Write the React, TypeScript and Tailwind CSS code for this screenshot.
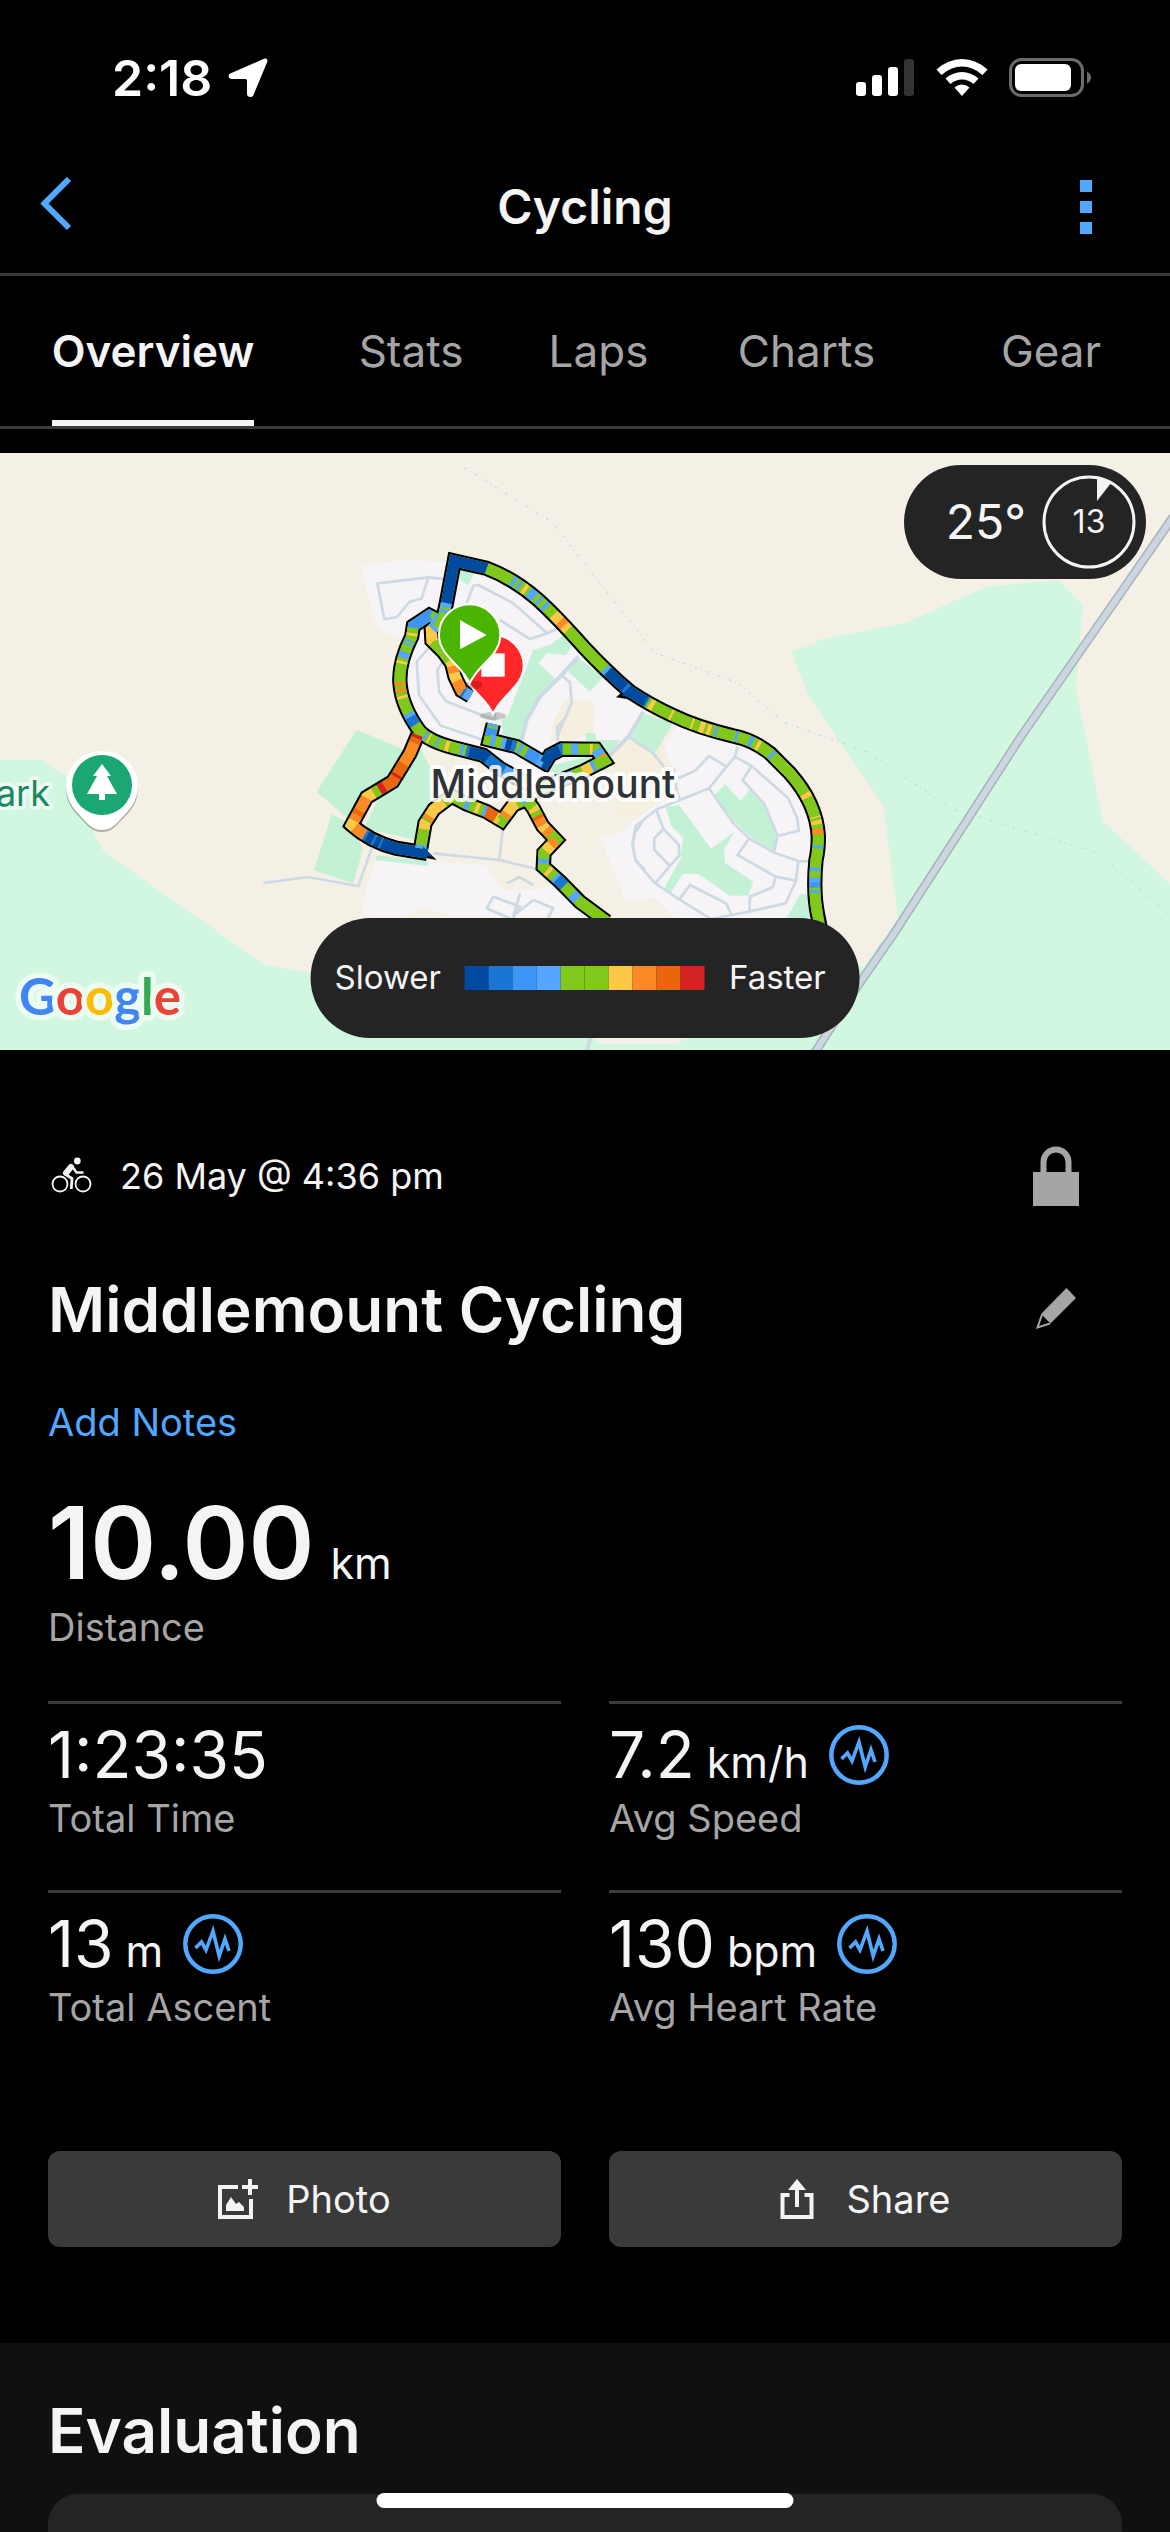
import React from "react";

const C = {
  b0: "#004a9f",
  b1: "#1976d2",
  b2: "#3d96f5",
  b3: "#54a6ff",
  g: "#80c91c",
  y: "#fbc947",
  o: "#fa8926",
  d: "#ea660d",
  r: "#d32222",
} as const;
type Shade = keyof typeof C;

/* Each track is a line with its speed bands, listed as [shade, length along the line]. */
const tracks: { d: string; bands: [Shade, number][] }[] = [
  {
    d: "M368 300L378 255L403 123L500 145Q580 175 655 240Q710 290 790 380Q860 455 930 515Q990 555 1055 585Q1130 622 1240 648Q1300 660 1350 700L1410 760Q1490 850 1495 950Q1495 990 1488 1020Q1478 1120 1495 1195L1505 1250",
    bands: [
      ["g", 22], ["b3", 10], ["g", 6], ["b3", 14], ["b0", 228], ["g", 84], ["b3", 12], ["g", 10], ["b3", 9], ["g", 10], ["y", 12],
      ["g", 8], ["b3", 24], ["g", 12], ["b3", 10], ["g", 14], ["b3", 12], ["g", 30], ["y", 26], ["o", 20], ["y", 16], ["g", 160],
      ["b3", 12], ["b0", 70], ["b1", 10], ["b0", 66], ["b1", 6], ["g", 8], ["y", 14], ["g", 56], ["y", 7], ["g", 62], ["y", 6],
      ["g", 20], ["y", 16], ["g", 8], ["y", 12], ["g", 10], ["b3", 8], ["g", 56], ["b3", 8], ["g", 36], ["b3", 12], ["g", 14],
      ["y", 10], ["g", 40], ["b3", 10], ["g", 148], ["y", 14], ["g", 62], ["y", 4], ["g", 8], ["y", 12], ["g", 12], ["o", 18],
      ["g", 32], ["b3", 10], ["g", 58], ["b3", 10], ["g", 20], ["b3", 14], ["b2", 16], ["g", 8], ["b3", 8], ["g", 60],
    ],
  },
  {
    d: "M452 528L425 512L405 470L395 430L372 398L336 362L334 330L358 306",
    bands: [["b3", 20], ["b1", 8], ["o", 36], ["y", 26], ["o", 20], ["y", 20], ["g", 75], ["y", 40], ["b3", 12], ["g", 20]],
  },
  {
    d: "M362 304L328 286L280 318L275 350Q235 430 240 490Q245 560 300 635Q330 665 400 683L490 706L540 745L620 790",
    bands: [
      ["g", 14], ["b3", 10], ["g", 12], ["b2", 66], ["g", 16], ["y", 8], ["g", 14], ["b3", 6], ["g", 5], ["b3", 6], ["g", 22],
      ["b3", 18], ["g", 10], ["y", 8], ["g", 56], ["o", 10], ["g", 10], ["o", 10], ["g", 12], ["y", 8], ["g", 48], ["b3", 12],
      ["b1", 28], ["g", 42], ["b3", 8], ["g", 6], ["y", 6], ["g", 22], ["b3", 6], ["g", 22], ["y", 12], ["g", 34], ["b3", 10],
      ["g", 8], ["b1", 10], ["b0", 60], ["b1", 60], ["b3", 40],
    ],
  },
  {
    d: "M293 645L270 700L218 785L140 832L95 915Q150 965 230 985L322 1000",
    bands: [
      ["r", 10], ["d", 16], ["o", 70], ["d", 38], ["r", 8], ["d", 46], ["r", 18], ["g", 20], ["y", 26], ["o", 44], ["d", 14],
      ["o", 20], ["y", 26], ["o", 38], ["b1", 8], ["b0", 20], ["b1", 8], ["b0", 16], ["b1", 6], ["b0", 200],
    ],
  },
  {
    d: "M302 985L315 910L342 868L395 828L440 852L500 875L545 902L580 855L620 838",
    bands: [
      ["b3", 10], ["g", 48], ["y", 26], ["g", 6], ["o", 12], ["y", 60], ["g", 12], ["y", 20], ["g", 44], ["b3", 14], ["g", 20],
      ["y", 12], ["g", 12], ["b3", 10], ["d", 34], ["y", 14], ["g", 20], ["o", 14], ["y", 40],
    ],
  },
  {
    d: "M612 828L640 865L668 918L708 960L672 998L670 1040L720 1085L780 1146L860 1205",
    bands: [
      ["b3", 20], ["g", 24], ["y", 14], ["g", 14], ["d", 10], ["o", 22], ["y", 16], ["o", 20], ["g", 26], ["o", 20], ["y", 24],
      ["g", 26], ["b3", 14], ["g", 24], ["y", 12], ["g", 18], ["b3", 10], ["b1", 30], ["g", 34], ["b3", 22], ["g", 120],
    ],
  },
  {
    d: "M520 612L508 660L590 680L675 730L690 705L725 687L828 688L852 722L790 754L700 790L620 828",
    bands: [
      ["b3", 8], ["g", 6], ["b2", 26], ["g", 14], ["b3", 14], ["g", 20], ["b3", 12], ["b0", 18], ["b1", 14], ["g", 10], ["b3", 10],
      ["g", 16], ["b2", 40], ["b3", 20], ["b0", 66], ["b1", 10], ["g", 26], ["b3", 20], ["g", 36], ["y", 8], ["g", 12], ["b3", 20],
      ["o", 10], ["g", 40], ["b3", 12], ["y", 30], ["g", 30], ["b3", 60],
    ],
  },
];

const Track = ({ d, bands }: { d: string; bands: [Shade, number][] }) => {
  let at = 0;
  return (
    <g>
      <path d={d} stroke={C.g} strokeWidth="33" />
      {bands.map(([shade, len], i) => {
        const from = at;
        at += len;
        return <path key={i} d={d} stroke={C[shade]} strokeWidth="33" strokeDasharray={`0 ${from} ${len + 1} 9999`} />;
      })}
    </g>
  );
};

const RouteMap = () => (
  <svg viewBox="0 0 1170 597" preserveAspectRatio="xMidYMid slice" className="block h-auto w-full" role="img" aria-label="Route map of Middlemount">
    <rect width="1170" height="597" fill="#f4f0e5" />
    <path d="M0 307H42L65 323L94 380L103 398L265 512L311 520L600 560L863 514L898 466L883 352L809 244L791 198L817 190V187L905 170L986 134L1059 127L1083 152L1076 235L1103 368L1170 431V597H0Z" fill="#d2f7e0" />
    <path d="M590 584L602 591H676L690 584Z" fill="#f4f0e5" />
    <path d="M591 584L587 597" stroke="#cdd9e3" strokeWidth="4" />
    <path d="M460 12L552 69L613 147L655 200L738 230L783 269L867 299L952 356L1098 400L1168 460" fill="none" stroke="#a4e0ec" strokeWidth="1" strokeDasharray="1 4 3 4" />
    <path d="M874 502L880 491L890 486L884 500Z" fill="#cdd9e3" />
    <path d="M1180 54L1120 141L1020 285L895 479L857 534L812 604" fill="none" stroke="#a7b2bc" strokeWidth="9" />
    <path d="M1180 54L1120 141L1020 285L895 479L857 534L812 604" fill="none" stroke="#ccd6df" strokeWidth="6" />

    <g transform="translate(320 67) scale(0.33333)" fill="none">
      <g fill="#f6f4f6">
        <path d="M122 142L250 118L385 128L500 150L620 220L740 330L840 430L960 520L1060 560L1070 620L1000 560L960 600L930 650L850 700L700 760L620 780L500 705L300 640L245 480L262 365L172 325Z" />
        <path d="M960 520L1070 585L1240 650L1400 720L1490 840L1505 970L1470 1030L1475 1205H1075L1005 1135L918 1140L840 950L890 945L1005 855L1075 820V775L1040 750L1020 695L1070 620Z" />
        <path d="M168 1018L500 1035L545 1110H640L700 1090L800 1190H130L127 1145Z" />
      </g>
      <path d="M740 535L822 545L820 640L740 665L690 665L700 600ZM925 655L1000 600L1040 700L1075 780L1000 850L900 900L860 760L870 705Z" fill="#f5efe0" />
      <path d="M230 1195L310 1165L430 1195Z" fill="#f4f0e5" />
      <g fill="#c3f1d6">
        <path d="M420 150L462 160L445 195L420 180ZM545 600L562 590L620 440L640 390L690 375L730 345L755 380L738 405L680 400L655 430L705 475L640 560L600 660L548 650ZM775 415L850 470L810 515L745 455Z" />
        <path d="M110 629L255 690L285 700L170 820L80 892L-10 815ZM35 883L80 905L130 984L100 1090L-18 1050ZM300 680L330 740L345 845L310 965L130 925L190 810ZM170 1005L325 1025L322 1038L165 1020Z" />
        <path d="M700 735L840 700L850 720L740 765L690 755ZM795 640H828V660H900L860 715L800 680Z" />
        <path d="M970 580L1058 610L1005 700L932 655ZM1215 792L1262 842L1290 810L1335 860L1370 945L1362 995L1290 950L1230 890L1185 825ZM1037 862L1078 855L1173 986L1243 935L1212 990L1215 1028L1300 1085L1285 1127H1230L1135 1062H1088L1052 1120L1033 1105L1085 1010L1102 1010L1080 1010L1090 955L1055 920ZM1440 1123H1465L1475 1195H1400Z" />
      </g>
      <g stroke="#cdd9e3" strokeWidth="8">
        <path d="M385 178L325 172L172 190L193 297L230 292L268 246L305 235L325 172M440 250L460 197L475 195L580 250L682 340L715 325M540 300L630 357L682 340M360 345L290 425L297 525L362 617L490 660M375 415L352 450L357 515L380 545L525 600V580" />
        <path d="M725 465L750 488L755 550L715 640L712 665M735 595L712 620V650M925 650L960 675L1000 700L1035 745M550 915L538 1020M340 1000L538 1020L650 1047M560 1090L598 1072L640 1095M155 985L115 1098L-38 1071L-170 1089M967 905L945 940L938 975L947 1020L975 1050" />
        <path d="M1075 775L1125 753L1167 708L1220 740M1253 680L1245 710L1220 740L1167 805L1080 840L1010 868L947 918L937 975L947 1022L1005 1090L1078 1138L1170 1195M1245 710L1295 738L1405 835L1432 895L1436 932L1373 948L1362 995M1295 738L1268 780L1333 852L1373 948M1167 805L1238 907L1287 955L1362 998L1435 1023L1470 1025M1287 955L1253 1005L1367 1070L1428 1082L1435 1023M1428 1082L1397 1150L1287 1175L1235 1185L1170 1197M1367 1070L1358 1102L1290 1130L1288 1175M1235 1185L1218 1150L1110 1095L1078 1138M1010 872L1030 927L1077 975V1007L1050 1038L1005 1090M1030 927L1003 955V990L1050 1038M1062 745L1070 810L1080 840" />
        <path d="M520 1130L500 1165L580 1200M520 1130L600 1160L570 1210M640 1140L700 1165L680 1200M640 1140L590 1180M600 1120L580 1190" />
        <path d="M775 410L725 465L660 530L620 600L605 660M970 575L925 650L870 705" strokeWidth="12" />
      </g>

      <g stroke="#000" strokeWidth="46">
        {tracks.map((t) => (
          <path key={t.d} d={t.d} />
        ))}
        <path d="M300 972L350 1020L300 1010ZM888 532L925 500L940 540ZM836 672L878 730L850 750Z" fill="#000" stroke="none" />
      </g>
      {tracks.map((t) => (
        <Track key={t.d} {...t} />
      ))}
      <path d="M310 980L338 1010L300 1005ZM905 526L925 508L935 535Z" fill={C.b0} />

      <ellipse cx="519" cy="588" rx="40" ry="12" fill="#000" opacity=".18" />
      <path d="M519 582C495 525 427 500 427 437A92 92 0 0 1 611 437C611 500 543 525 519 582Z" fill="#ff272a" stroke="#fff" strokeWidth="6" />
      <path d="M484 400H554V470H484Z" fill="#fff" />
      <ellipse cx="462" cy="494" rx="26" ry="12" fill="#8c0a0a" opacity=".35" />
      <path d="M449 490C425 433 357 408 357 345A92 92 0 0 1 541 345C541 408 473 433 449 490Z" fill="#4bb400" stroke="#fff" strokeWidth="6" />
      <path d="M420 300V388L500 345Z" fill="#fff" />
    </g>

    <text x="553" y="345" textAnchor="middle" fill="#2f3338" stroke="#fff" strokeOpacity=".85" strokeWidth="8" strokeLinejoin="round" paintOrder="stroke" className="font-['Inter',sans-serif] text-[39px] font-medium">
      Middlemount
    </text>
    <text x="50" y="353" textAnchor="end" fill="#1c8763" stroke="#ecfcf3" strokeWidth="7" strokeLinejoin="round" paintOrder="stroke" className="font-['Inter',sans-serif] text-[36px]">
      ark
    </text>

    <path d="M102 379C94 379 90 375 86 371C76 360 66 353 66 335A36 36 0 0 1 138 335C138 353 128 360 118 371C114 375 110 379 102 379Z" fill="#000" opacity=".28" />
    <path d="M102 377C94 377 90 373 86 369C76 358 66 350 66 332A36 34 0 0 1 138 332C138 350 128 358 118 369C114 373 110 377 102 377Z" fill="#fff" />
    <circle cx="102" cy="332" r="30" fill="#1aa774" />
    <path d="M102 311L111 323H107L117 341H105V347H99V341H87L97 323H93Z" fill="#fff" />

    <text x="19" y="562" stroke="#ecfcf3" strokeWidth="11" strokeLinejoin="round" paintOrder="stroke" className="font-['Lato',sans-serif] text-[51px] font-bold">
      <tspan fill="#4285f4">G</tspan>
      <tspan fill="#ea4335">o</tspan>
      <tspan fill="#fbbc05">o</tspan>
      <tspan fill="#4285f4">g</tspan>
      <tspan fill="#34a853">l</tspan>
      <tspan fill="#ea4335">e</tspan>
    </text>
  </svg>
);

const PulseIcon = () => (
  <svg viewBox="0 0 60 60" className="size-[60px]" fill="none" stroke="#52a7ff" aria-hidden="true">
    <circle cx="30" cy="30" r="27.7" strokeWidth="4.5" />
    <path d="M12.5 34L18.5 28L23 36L30 17L36.2 42L42 25L46 37" strokeWidth="3.6" strokeMiterlimit="10" />
  </svg>
);

const BikeIcon = () => (
  <svg viewBox="-2 0 44 40" className="h-10 w-11" fill="none" stroke="#f4f4f4" aria-hidden="true">
    <circle cx="10" cy="28" r="7.5" strokeWidth="1.8" />
    <circle cx="33" cy="28" r="7.5" strokeWidth="1.8" />
    <circle cx="27.3" cy="5" r="3.4" fill="#f4f4f4" stroke="none" />
    <path d="M21 11L16 17" strokeWidth="6" strokeLinecap="round" />
    <path d="M15 18L22 22.5L21.3 33" strokeWidth="2.8" />
    <path d="M22 10L26.5 16.5H33.5" strokeWidth="2.4" />
  </svg>
);

const stats = [
  { label: "Total Time", value: "1:23:35" },
  { label: "Avg Speed", value: "7.2", unit: "km/h", chart: true },
  { label: "Total Ascent", value: "13", unit: "m", chart: true },
  { label: "Avg Heart Rate", value: "130", unit: "bpm", chart: true },
];

const tabs = ["Overview", "Stats", "Laps", "Charts", "Gear"];

const legend = [
  "bg-[#004a9f]",
  "bg-[#1976d2]",
  "bg-[#3d96f5]",
  "bg-[#54a6ff]",
  "bg-[#80c91c]",
  "bg-[#80c91c]",
  "bg-[#fbc947]",
  "bg-[#fa8926]",
  "bg-[#ea660d]",
  "bg-[#d32222]",
];

export default function App() {
  return (
    <div className="flex min-h-screen flex-col bg-black font-['Inter',sans-serif] text-[#f4f4f4]">
      <div className="flex h-[156px] items-center justify-between pr-[78px] pl-[112px] text-white">
        <div className="flex items-center gap-4">
          <span className="text-[50px] leading-none font-semibold">2:18</span>
          <svg viewBox="0 0 40 40" className="size-10" fill="#fff" aria-hidden="true">
            <path d="M36 .8C38.600 -.2 40 1.400 39.200 4L25.500 37C24.300 40 19 39.600 19 36V22.500Q19 21 17.500 21H4C.2 21 -.6 16.800 2.800 15.300Z" />
          </svg>
        </div>
        <svg viewBox="0 0 236 40" className="h-10 w-[236px]" fill="#fff" aria-hidden="true">
          <rect x="0" y="24" width="10" height="14" rx="3" />
          <rect x="16" y="17" width="10" height="21" rx="3" />
          <rect x="32" y="9" width="10" height="29" rx="3" />
          <rect x="48" y="1" width="10" height="37" rx="3" fill="#333" />
          <path d="M80.500 11.500Q92 1 106 1T131.500 11.500L126.500 17Q117 8.500 106 8.500T85.500 17Z" />
          <path d="M89.500 20.500Q97 14 106 14T122.500 20.500L117.500 26Q112.500 21.500 106 21.500T94.500 26Z" />
          <path d="M98.500 29.500Q102 26.500 106 26.500T113.500 29.500L106 38Z" />
          <rect x="154.500" y="1.500" width="72" height="36" rx="11" fill="none" stroke="#6b6b6b" strokeWidth="3" />
          <rect x="159" y="6" width="56" height="27" rx="6" />
          <path d="M231 13.500Q235 15.500 235 19.500T231 25.500Z" fill="#6b6b6b" />
        </svg>
      </div>

      <header className="grid h-[120px] grid-cols-[1fr_auto_1fr] items-center border-b-[3px] border-[#3a3a3a] pb-[15px]">
        <button aria-label="Back" className="ml-9 flex w-12 items-center">
          <svg viewBox="0 0 40 60" className="h-15 w-10" fill="none" stroke="#52a7ff" strokeWidth="6" aria-hidden="true">
            <path d="M33 2L8.500 26.500L33 51" />
          </svg>
        </button>
        <h1 className="text-[48px] leading-none font-semibold">Cycling</h1>
        <button aria-label="More options" className="mr-[72px] flex w-12 flex-col items-end gap-[9px] justify-self-end pr-[6px]">
          <span className="size-3 bg-[#52a7ff]" />
          <span className="size-3 bg-[#52a7ff]" />
          <span className="size-3 bg-[#52a7ff]" />
        </button>
      </header>

      <nav className="grid h-[153px] grid-cols-[306fr_210fr_165fr_251fr_238fr] border-b-[3px] border-[#3a3a3a]" role="tablist">
        {tabs.map((t, i) => (
          <button
            key={t}
            role="tab"
            aria-selected={i === 0}
            className={
              i === 0
                ? "flex items-center justify-self-center border-y-6 border-transparent border-b-[#f4f4f4] text-[44px] font-semibold"
                : "flex items-center justify-self-center text-[44px] text-[#a5a5a5]"
            }
          >
            {t}
          </button>
        ))}
      </nav>

      <section className="relative mt-6">
        <RouteMap />
        <div className="absolute top-3 right-6 flex h-[114px] items-center rounded-full bg-[#242424] pr-[10px] pl-[42px]">
          <span className="text-[48px] leading-none">25°</span>
          <svg viewBox="0 0 94 94" className="ml-4 size-[94px]" aria-label="Wind 13" role="img">
            <circle cx="47" cy="47" r="45" fill="none" stroke="#f4f4f4" strokeWidth="3" />
            <path d="M55 3L69 8L55 26Z" fill="#f4f4f4" />
            <text x="47" y="58" textAnchor="middle" fill="#f4f4f4" className="text-[32px]">
              13
            </text>
          </svg>
        </div>
        <div className="absolute bottom-3 left-1/2 grid h-[120px] -translate-x-1/2 grid-cols-[1fr_auto_1fr] items-center gap-6 rounded-full bg-[#242424] px-6 text-[33px]">
          <span>Slower</span>
          <span className="flex">
            {legend.map((c, i) => (
              <span key={i} className={`size-6 ${c}`} />
            ))}
          </span>
          <span>Faster</span>
        </div>
      </section>

      <main className="px-12 pt-24 pb-24">
        <div className="flex h-[60px] items-center">
          <BikeIcon />
          <span className="ml-[28px] text-[36px]">26 May @ 4:36 pm</span>
          <button aria-label="Privacy" className="mr-[42px] ml-auto">
            <svg viewBox="0 0 48 60" className="h-15 w-12" fill="#a5a5a5" aria-hidden="true">
              <rect x="1" y="26" width="46" height="34" />
              <path d="M11.500 27V16A12.500 12.500 0 0 1 36.500 16V27" fill="none" stroke="#a5a5a5" strokeWidth="6" />
            </svg>
          </button>
        </div>

        <div className="mt-[63px] flex h-20 items-center">
          <h2 className="text-[62px] font-semibold">Middlemount Cycling</h2>
          <button aria-label="Edit title" className="mr-[45px] ml-auto">
            <svg viewBox="0 0 42 42" className="size-[42px]" fill="#a5a5a5" aria-hidden="true">
              <path d="M31.500 0L41 10L15.500 35.500L6 26Z" />
              <path d="M7 26.500L2.500 39.500L15 35.500" fill="none" stroke="#a5a5a5" strokeWidth="2" />
            </svg>
          </button>
        </div>

        <button className="mt-[49px] block h-12 text-[38px] leading-[48px] text-[#52a7ff]">Add Notes</button>

        <div className="mt-[47px] flex h-[100px] items-baseline gap-4">
          <span className="text-[100px] leading-[100px] font-semibold">10.00</span>
          <span className="text-[43px] leading-none">km</span>
        </div>
        <p className="mt-[10px] text-[38px] leading-[48px] text-[#a5a5a5]">Distance</p>

        <div className="mt-[50px] grid grid-cols-2 gap-x-12">
          {stats.map((s) => (
            <div key={s.label} className="border-t-[3px] border-[#3a3a3a] pt-[21px] pb-12">
              <div className="flex h-[60px] items-center gap-5">
                <span className="flex items-baseline gap-3">
                  <span className="text-[64px] leading-[60px]">{s.value}</span>
                  {s.unit && <span className="text-[43px] leading-none">{s.unit}</span>}
                </span>
                {s.chart && (
                  <button aria-label={`${s.label} chart`}>
                    <PulseIcon />
                  </button>
                )}
              </div>
              <p className="mt-[9px] text-[38px] leading-[48px] text-[#a5a5a5]">{s.label}</p>
            </div>
          ))}
        </div>

        <div className="mt-[72px] grid grid-cols-2 gap-x-12 text-[38px]">
          <button className="flex h-24 items-center justify-center gap-7 rounded-xl bg-[#3a3a3a]">
            <svg viewBox="0 0 40 40" className="size-10" fill="none" stroke="#f4f4f4" aria-hidden="true">
              <path d="M20 8H2V38H33V20" strokeWidth="4" />
              <path d="M32 0V16M24 8H40" strokeWidth="4" />
              <path d="M8 32V26L13 18L18 25L21 23L26 28V32Z" fill="#f4f4f4" stroke="none" />
            </svg>
            Photo
          </button>
          <button className="flex h-24 items-center justify-center gap-8 rounded-xl bg-[#3a3a3a]">
            <svg viewBox="0 0 34 40" className="h-10 w-[34px]" fill="none" stroke="#f4f4f4" aria-hidden="true">
              <path d="M9.500 16H2.500V38H31.500V16H24.500" strokeWidth="4" />
              <path d="M17 28V4" strokeWidth="4" />
              <path d="M17 0L26 11H8Z" fill="#f4f4f4" stroke="none" />
            </svg>
            Share
          </button>
        </div>
      </main>

      <section className="flex flex-1 flex-col bg-[#101010] px-12 pt-12">
        <h2 className="text-[62px] leading-[80px] font-semibold">Evaluation</h2>
        <div className="mt-[23px] min-h-[38px] flex-1 rounded-t-[30px] bg-[#242424]" />
      </section>

      <div className="fixed bottom-6 left-1/2 h-[15px] w-[417px] -translate-x-1/2 rounded-full bg-white" />
    </div>
  );
}
